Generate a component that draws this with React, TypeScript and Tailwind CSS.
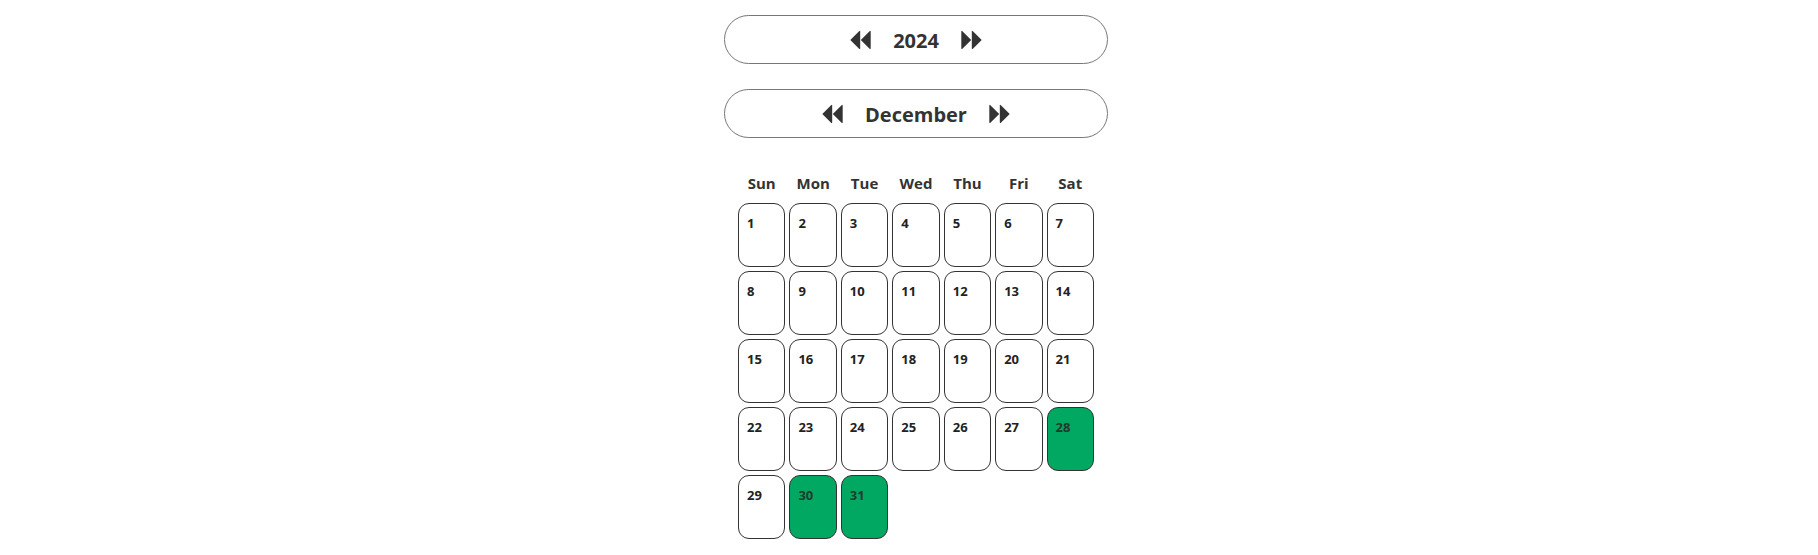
import React from "react";

const Arrow = ({ flip }: { flip?: boolean }) => (
  <svg
    width="21"
    height="20"
    viewBox="0 0 21 20"
    fill="#333"
    style={flip ? { transform: "scaleX(-1)" } : undefined}
  >
    <path d="M0.3 10 L9.6 0.8 L10.2 1.4 L10.2 18.6 L9.6 19.2 Z" />
    <path d="M10.8 10 L20.1 0.8 L20.7 1.4 L20.7 18.6 L20.1 19.2 Z" />
  </svg>
);

const days = ["Sun", "Mon", "Tue", "Wed", "Thu", "Fri", "Sat"];
const green = new Set([28, 30, 31]);

export default function App() {
  const cells = Array.from({ length: 31 }, (_, i) => i + 1);
  return (
    <div
      className="flex justify-center pt-[15px] pl-[14px] bg-white min-h-[555px] text-[#333]"
      style={{ fontFamily: '"Open Sans", "Noto Sans", sans-serif' }}
    >
      <div className="w-[384px] flex flex-col items-center">
        <div className="w-full h-[49px] rounded-full border border-[#777] flex items-center justify-center gap-[22px] pt-[1px]">
          <Arrow />
          <span className="text-[20px] font-bold leading-[24px] pt-[2px]">2024</span>
          <Arrow flip />
        </div>
        <div className="w-full h-[49px] mt-[25px] rounded-full border border-[#777] flex items-center justify-center gap-[22px] pt-[1px]">
          <Arrow />
          <span className="text-[20px] font-bold leading-[24px] pt-[2px]">December</span>
          <Arrow flip />
        </div>
        <div className="w-[356px] mt-[35px] grid grid-cols-7 gap-x-1">
          {days.map((d) => (
            <div key={d} className="text-center text-[15px] font-bold leading-[20px]">
              {d}
            </div>
          ))}
        </div>
        <div className="w-[356px] mt-[10px] grid grid-cols-7 gap-x-1 gap-y-1">
          {cells.map((n) => (
            <div
              key={n}
              className={
                "h-[64px] rounded-[11px] border border-[#333] pl-[8px] pt-[10px] text-[13px] font-bold leading-[18px] " +
                (green.has(n) ? "bg-[#00a862] text-[#1e3b2c]" : "bg-white text-[#222]")
              }
            >
              {n}
            </div>
          ))}
        </div>
      </div>
    </div>
  );
}
